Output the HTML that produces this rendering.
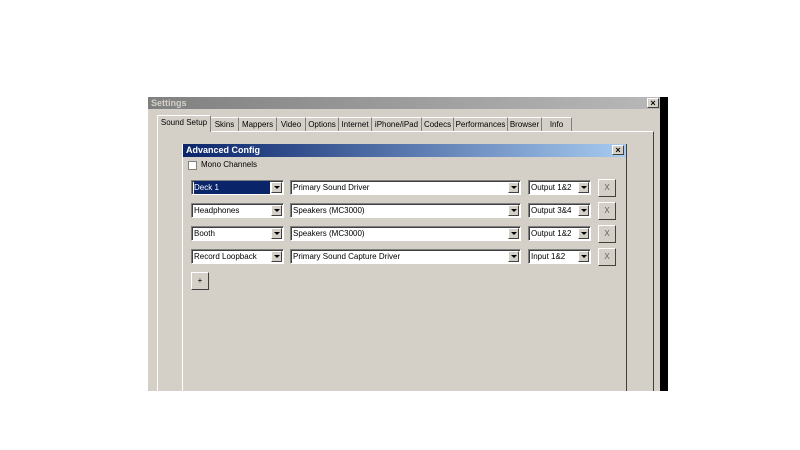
<!DOCTYPE html>
<html><head><style>
*{margin:0;padding:0;box-sizing:border-box}
body{width:800px;height:450px;background:#fff;position:relative;overflow:hidden;font-family:"Liberation Sans",sans-serif;font-size:8px;color:#000}
.a{position:absolute}
.win{left:148px;top:97px;width:512px;height:294px;background:#d4d0c8}
.title{left:148px;top:97px;width:512px;height:12px;background:linear-gradient(90deg,#808080,#b8b8b8);color:#d4d0c8;font-weight:bold;font-size:9px;line-height:12px;padding-left:3px}
.xb{width:12px;height:10px;background:#d4d0c8;border:1px solid;border-color:#fff #404040 #404040 #fff;font-size:9px;line-height:8px;text-align:center;font-weight:bold}
.tab{top:117px;height:14px;line-height:14px;text-align:center;border-right:1px solid #808080;border-top:1px solid #fff;font-size:8px}
.panel{left:157px;top:131px;width:497px;height:260px;border-left:1px solid #fff;border-top:1px solid #fff;border-right:1px solid #404040}
.dlg{left:182px;top:144px;width:445px;height:247px;border-left:1px solid #fff;border-right:1px solid #404040;background:#d4d0c8}
.dt{left:183px;top:144px;width:443px;height:13px;background:linear-gradient(90deg,#0a246a,#a6caf0);color:#fff;font-weight:bold;line-height:13px;padding-left:3px;font-size:9px}
.cb{height:15px;background:#fff;border:1px solid;border-color:#808080 #fff #fff #808080;box-shadow:inset 1px 1px 0 #404040;line-height:13px;padding-left:2px;white-space:nowrap;overflow:hidden}
.cb i{position:absolute;right:1px;top:1px;width:11px;height:11px;background:#d4d0c8;border:1px solid;border-color:#fff #404040 #404040 #fff}
.cb i:after{content:"";position:absolute;left:2px;top:3px;border-left:3px solid transparent;border-right:3px solid transparent;border-top:3px solid #000}
.btn{width:18px;height:18px;background:#d4d0c8;border:1px solid;border-color:#fff #404040 #404040 #fff;text-align:center;line-height:16px;color:#606060}
</style></head><body>
<div class="a win"></div>
<div class="a" style="left:660px;top:97px;width:8px;height:294px;background:#000"></div>
<div class="a title">Settings</div>
<div class="a xb" style="left:647px;top:98px">×</div>
<div class="a panel"></div>
<div class="a tab" style="left:157px;top:115px;width:54px;height:17px;border-left:1px solid #fff;background:#d4d0c8">Sound Setup</div>
<div class="a tab" style="left:211px;width:28px">Skins</div>
<div class="a tab" style="left:239px;width:38px">Mappers</div>
<div class="a tab" style="left:277px;width:29px">Video</div>
<div class="a tab" style="left:306px;width:33px">Options</div>
<div class="a tab" style="left:339px;width:33px">Internet</div>
<div class="a tab" style="left:372px;width:50px">iPhone/iPad</div>
<div class="a tab" style="left:422px;width:32px">Codecs</div>
<div class="a tab" style="left:454px;width:54px">Performances</div>
<div class="a tab" style="left:508px;width:34px">Browser</div>
<div class="a tab" style="left:542px;width:30px">Info</div>
<div class="a dlg"></div>
<div class="a dt">Advanced Config</div>
<div class="a xb" style="left:612px;top:145px">×</div>
<div class="a" style="left:188px;top:161px;width:9px;height:9px;background:#fff;border:1px solid #808080"></div>
<div class="a" style="left:201px;top:160px">Mono Channels</div>

<div class="a cb" style="left:191px;top:180px;width:93px"><span style="background:#0a246a;color:#fff;outline:1px dotted #fff;display:inline-block;width:76px">Deck 1</span><i></i></div>
<div class="a cb" style="left:290px;top:180px;width:231px">Primary Sound Driver<i></i></div>
<div class="a cb" style="left:528px;top:180px;width:63px">Output 1&amp;2<i></i></div>
<div class="a btn" style="left:598px;top:179px">X</div>

<div class="a cb" style="left:191px;top:203px;width:93px">Headphones<i></i></div>
<div class="a cb" style="left:290px;top:203px;width:231px">Speakers (MC3000)<i></i></div>
<div class="a cb" style="left:528px;top:203px;width:63px">Output 3&amp;4<i></i></div>
<div class="a btn" style="left:598px;top:202px">X</div>

<div class="a cb" style="left:191px;top:226px;width:93px">Booth<i></i></div>
<div class="a cb" style="left:290px;top:226px;width:231px">Speakers (MC3000)<i></i></div>
<div class="a cb" style="left:528px;top:226px;width:63px">Output 1&amp;2<i></i></div>
<div class="a btn" style="left:598px;top:225px">X</div>

<div class="a cb" style="left:191px;top:249px;width:93px">Record Loopback<i></i></div>
<div class="a cb" style="left:290px;top:249px;width:231px">Primary Sound Capture Driver<i></i></div>
<div class="a cb" style="left:528px;top:249px;width:63px">Input 1&amp;2<i></i></div>
<div class="a btn" style="left:598px;top:248px">X</div>

<div class="a btn" style="left:191px;top:272px;color:#000">+</div>
</body></html>
